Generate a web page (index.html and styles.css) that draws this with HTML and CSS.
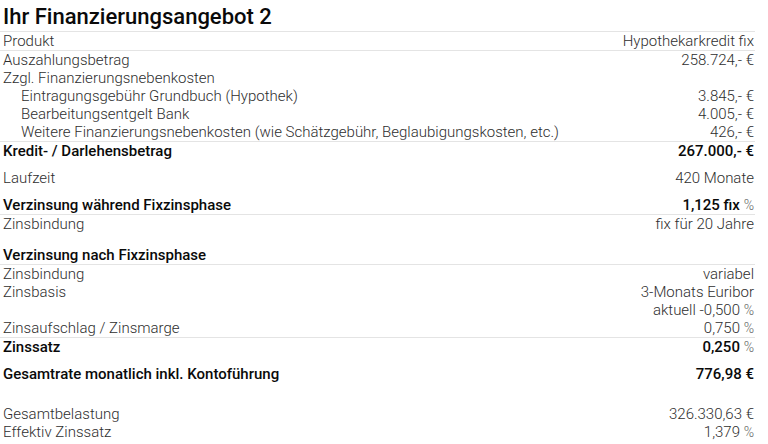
FILE: index.html
```html
<!DOCTYPE html>
<html lang="de">
<head>
<meta charset="utf-8">
<title>Ihr Finanzierungsangebot 2</title>
<link rel="stylesheet" href="styles.css">
</head>
<body>
<div class="offer">
  <h2 class="title">Ihr Finanzierungsangebot 2</h2>
  <div class="row"><span>Produkt</span><span>Hypothekarkredit fix</span></div>
  <div class="row line"><span>Auszahlungsbetrag</span><span>258.724,- €</span></div>
  <div class="row"><span>Zzgl. Finanzierungsnebenkosten</span><span></span></div>
  <div class="row sub"><span>Eintragungsgebühr Grundbuch (Hypothek)</span><span>3.845,- €</span></div>
  <div class="row sub"><span>Bearbeitungsentgelt Bank</span><span>4.005,- €</span></div>
  <div class="row sub"><span>Weitere Finanzierungsnebenkosten (wie Schätzgebühr, Beglaubigungskosten, etc.)</span><span>426,- €</span></div>
  <div class="row line bold"><span>Kredit- / Darlehensbetrag</span><span>267.000,- €</span></div>

  <div class="row gap"><span>Laufzeit</span><span>420 Monate</span></div>

  <div class="row gap bold"><span>Verzinsung während Fixzinsphase</span><span>1,125 fix <i class="pct">%</i></span></div>
  <div class="row line"><span>Zinsbindung</span><span>fix für 20 Jahre</span></div>

  <div class="row gap-l bold"><span>Verzinsung nach Fixzinsphase</span><span></span></div>
  <div class="row line"><span>Zinsbindung</span><span>variabel</span></div>
  <div class="row"><span>Zinsbasis</span><span>3-Monats Euribor</span></div>
  <div class="row"><span></span><span>aktuell -0,500 <i class="pct">%</i></span></div>
  <div class="row"><span>Zinsaufschlag / Zinsmarge</span><span>0,750 <i class="pct">%</i></span></div>
  <div class="row line bold"><span>Zinssatz</span><span>0,250 <i class="pct">%</i></span></div>

  <div class="row gap bold"><span>Gesamtrate monatlich inkl. Kontoführung</span><span>776,98 €</span></div>

  <div class="row gap-xl"><span>Gesamtbelastung</span><span>326.330,63 €</span></div>
  <div class="row"><span>Effektiv Zinssatz</span><span>1,379 <i class="pct">%</i></span></div>
</div>
</body>
</html>
```

FILE: styles.css
```css
html, body {
  margin: 0;
  padding: 0;
  background: #ffffff;
}

.offer {
  width: 755px;
  font-family: Roboto, "Liberation Sans", sans-serif;
  font-weight: 300;
  font-size: 15px;
  color: #2e2e2e;
}

.title {
  margin: 0;
  padding: 2px 0 0 3px;
  height: 29px;
  font-size: 22px;
  line-height: 29px;
  font-weight: 500;
  color: #0a0a0a;
  border-bottom: 1px solid #e4e4e4;
}

.row {
  display: flex;
  justify-content: space-between;
  height: 18px;
  line-height: 18px;
  padding: 0 1px 0 3px;
  white-space: nowrap;
}

.row.line {
  border-top: 1px solid #e4e4e4;
}

.row.sub span:first-child {
  padding-left: 18px;
}

.row.bold {
  font-weight: 500;
  color: #0a0a0a;
}

.row.gap {
  margin-top: 9px;
}

.row.gap-l {
  margin-top: 13px;
}

.row.gap-xl {
  margin-top: 22px;
}

.pct {
  font-style: normal;
  font-weight: 300;
  color: #666666;
  font-size: 14px;
}
```
